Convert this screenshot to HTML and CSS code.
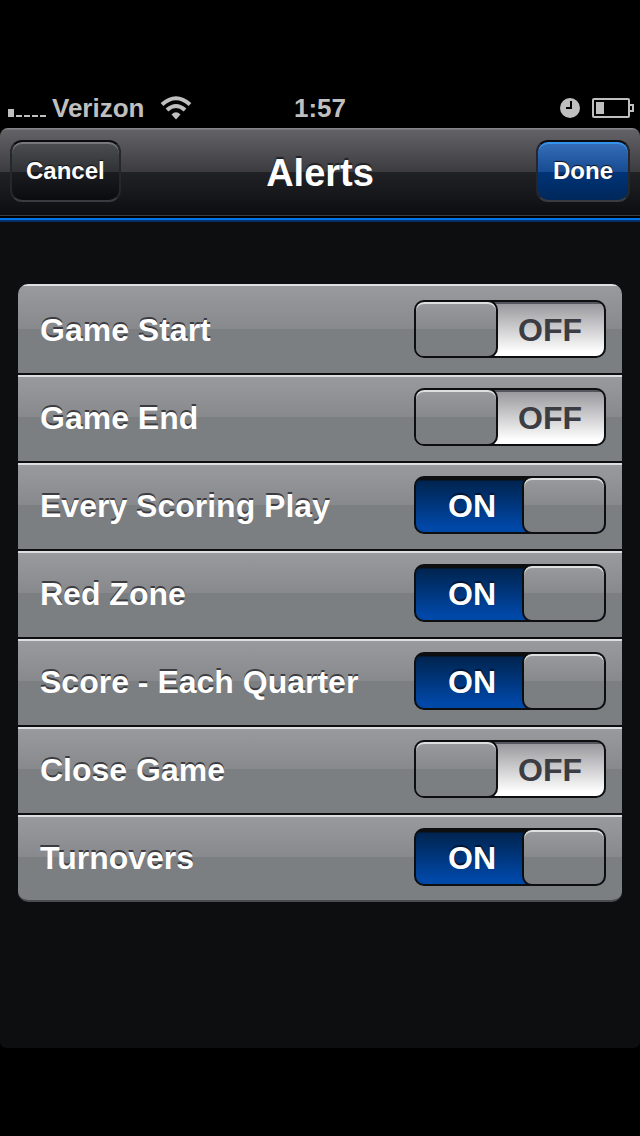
FILE: index.html
```html
<!DOCTYPE html>
<html lang="en">
<head>
<meta charset="utf-8">
<meta name="viewport" content="width=device-width, initial-scale=1">
<title>Alerts</title>
<link rel="stylesheet" href="styles.css">
</head>
<body>
<div class="status-bar">
  <div class="status-left">
    <svg class="signal" width="38" height="8" viewBox="0 0 38 8" fill="#bfbfbf" aria-hidden="true"><path d="M0 0h6v8H0zM8 6h6v2H8zM16 6h6v2h-6zM24 6h6v2h-6zM32 6h6v2h-6z"/></svg>
    <span class="carrier">Verizon</span>
    <svg class="wifi" width="32" height="24" viewBox="0 0 32 24" fill="none" stroke="#bfbfbf" stroke-width="4" aria-hidden="true"><path d="M2 8.500Q16 -4 30 8.500"/><path d="M7 14Q16 6 25 14"/><path d="M11.500 18.500Q16 14 20.500 18.500L16 23.500z" fill="#bfbfbf" stroke="none"/></svg>
  </div>
  <span class="time">1:57</span>
  <div class="status-right">
    <svg width="20" height="20" viewBox="0 0 20 20" aria-hidden="true"><circle cx="10" cy="10" r="10" fill="#bfbfbf"/><path d="M11 3v7H6" fill="none" stroke="#000" stroke-width="2"/></svg>
    <svg width="42" height="20" viewBox="0 0 42 20" fill="none" stroke="#bfbfbf" stroke-width="2" aria-hidden="true"><rect x="1" y="1" width="36" height="18" rx="1"/><path d="M38 7h3v6h-3"/><path d="M4 4h8v12H4z" fill="#bfbfbf" stroke="none"/></svg>
  </div>
</div>
<header class="nav-bar">
  <div class="nav-side"><button class="nav-button" type="button">Cancel</button></div>
  <h1 class="title">Alerts</h1>
  <div class="nav-side nav-end"><button class="nav-button done" type="button">Done</button></div>
</header>
<main class="content">
  <ul class="alerts">
    <li><label class="row"><span class="name">Game Start</span><span class="switch"><input type="checkbox" role="switch"><span class="state off">OFF</span><span class="state on">ON</span></span></label></li>
    <li><label class="row"><span class="name">Game End</span><span class="switch"><input type="checkbox" role="switch"><span class="state off">OFF</span><span class="state on">ON</span></span></label></li>
    <li><label class="row"><span class="name">Every Scoring Play</span><span class="switch"><input type="checkbox" role="switch" checked><span class="state off">OFF</span><span class="state on">ON</span></span></label></li>
    <li><label class="row"><span class="name">Red Zone</span><span class="switch"><input type="checkbox" role="switch" checked><span class="state off">OFF</span><span class="state on">ON</span></span></label></li>
    <li><label class="row"><span class="name">Score - Each Quarter</span><span class="switch"><input type="checkbox" role="switch" checked><span class="state off">OFF</span><span class="state on">ON</span></span></label></li>
    <li><label class="row"><span class="name">Close Game</span><span class="switch"><input type="checkbox" role="switch"><span class="state off">OFF</span><span class="state on">ON</span></span></label></li>
    <li><label class="row"><span class="name">Turnovers</span><span class="switch"><input type="checkbox" role="switch" checked><span class="state off">OFF</span><span class="state on">ON</span></span></label></li>
  </ul>
</main>
</body>
</html>
```
FILE: styles.css
```css
* {
  box-sizing: border-box;
}

body {
  margin: 0;
  min-height: 100vh;
  padding: 88px 0;
  display: flex;
  flex-direction: column;
  background: #000;
  color: #fff;
  font-family: "Liberation Sans", Arial, sans-serif;
  font-weight: bold;
}

.status-bar {
  display: grid;
  grid-template-columns: 1fr auto 1fr;
  align-items: center;
  height: 40px;
  padding: 0 6px;
  color: #bfbfbf;
  font-size: 26px;
  line-height: 40px;
}

.status-left,
.status-right {
  display: flex;
  align-items: center;
}

.signal {
  margin: 10px 6px 0 2px;
}

.wifi {
  margin-left: 16px;
}

.status-right {
  justify-content: flex-end;
  gap: 12px;
}

.nav-bar {
  display: grid;
  grid-template-columns: 1fr auto 1fr;
  align-items: start;
  height: 94px;
  padding: 12px 10px 0;
  border-bottom: 2px solid #043067;
  border-radius: 8px 8px 0 0;
  background:
    linear-gradient(#0073e6, #0073e6) 0 90px / 100% 2px no-repeat,
    linear-gradient(#000, #000) 0 88px / 100% 2px no-repeat,
    linear-gradient(#3a3b3f, #3a3b3f) 0 87px / 100% 1px no-repeat,
    linear-gradient(#85858b 1px, #626267 2px, #3c3c40 44px, #212226 44px, #0d0e10 86px);
}

.nav-end {
  text-align: right;
}

.title {
  margin: 0;
  font-size: 38px;
  line-height: 66px;
  text-shadow: 0 -2px 1px #202124;
}

.nav-button {
  height: 62px;
  padding: 0 14px;
  border: 2px solid #3a3b40;
  border-top-color: #0b0c0e;
  border-right-color: #26272b;
  border-left-color: #26272b;
  border-radius: 12px;
  background: linear-gradient(#4d4e52, #303135 30px, #1b1c20 30px, #0b0c0e);
  box-shadow: inset 0 2px 0 #77777d;
  color: #fff;
  font: inherit;
  font-size: 24px;
  text-shadow: 0 -1px 1px #111;
}

.done {
  padding: 0 15px;
  background: linear-gradient(#366fba, #174b92 30px, #003478 30px, #00285a);
  box-shadow: inset 0 2px 0 #3493ec;
}

.content {
  flex: 1;
  padding: 62px 18px;
  border-radius: 0 0 6px 6px;
  background: #0d0e10;
}

.alerts {
  margin: 0;
  padding: 0;
  list-style: none;
  overflow: hidden;
  border-bottom: 2px solid #4a4b4e;
  border-radius: 10px;
}

.row {
  display: flex;
  justify-content: space-between;
  align-items: flex-start;
  height: 88px;
  padding: 11px 16px 0 22px;
  border-top: 2px solid #dedfe1;
  border-bottom: 2px solid #0d0e10;
  background: linear-gradient(#989a9e, #88898c 40px, #7b7f81 40px);
}

li:first-child .row {
  height: 91px;
  padding-top: 14px;
  background: linear-gradient(#989a9e, #88898c 43px, #7b7f81 43px);
}

li:last-child .row {
  height: 85px;
  border-bottom: 0;
}

.name {
  font-size: 32px;
  line-height: 60px;
  text-shadow: 0 -2px 0 #3c3c40;
}

.switch {
  display: grid;
  width: 192px;
  height: 58px;
  overflow: hidden;
  border: 2px solid #0d0e10;
  border-radius: 10px;
  background: linear-gradient(#55555d 2px, #9a9a9e 2px, #fff 50px);
  font-size: 32px;
  line-height: 56px;
  text-align: center;
}

.switch:has(:checked) {
  background: linear-gradient(#0d0e10 2px, #002450 3px, #0048a8 50px);
}

.switch > * {
  grid-area: 1 / 1;
}

.switch input {
  appearance: none;
  width: 84px;
  height: 58px;
  margin: -2px;
  border: 2px solid #0d0e10;
  border-radius: 10px;
  background: linear-gradient(#989a9e, #88898c 27px, #7b7f81 27px);
  box-shadow: inset 0 2px 0 #dedfe1;
}

.switch input:checked {
  justify-self: end;
}

.state {
  height: 54px;
}

.off {
  padding-left: 80px;
  color: #3c3c43;
}

.on {
  display: none;
  padding-right: 76px;
  text-shadow: 0 -2px 1px #001533;
}

.switch input:checked ~ .on {
  display: block;
}

.switch input:checked ~ .off {
  display: none;
}
```
